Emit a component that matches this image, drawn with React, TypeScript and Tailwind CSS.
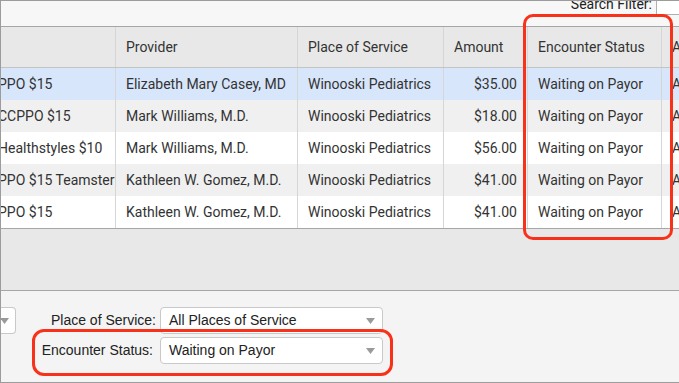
import React from "react";

const rows = [
  { payer: "PPO $15", provider: "Elizabeth Mary Casey, MD", amount: "$35.00", bg: "bg-[#d8e6fb]" },
  { payer: "CCPPO $15", provider: "Mark Williams, M.D.", amount: "$18.00", bg: "bg-[#f0f0f0]" },
  { payer: "Healthstyles $10", provider: "Mark Williams, M.D.", amount: "$56.00", bg: "bg-white" },
  { payer: "PPO $15 Teamster", provider: "Kathleen W. Gomez, M.D.", amount: "$41.00", bg: "bg-[#f0f0f0]" },
  { payer: "PPO $15", provider: "Kathleen W. Gomez, M.D.", amount: "$41.00", bg: "bg-white" },
];

const cell = "h-full flex items-center whitespace-nowrap overflow-hidden border-r border-[#d6d6d6]";

function Arrow() {
  return (
    <svg width="9" height="6" viewBox="0 0 9 6" className="shrink-0">
      <path d="M0 0 L9 0 L4.5 6 Z" fill="#9a9a9a" />
    </svg>
  );
}

export default function App() {
  return (
    <div className="relative w-[679px] h-[383px] overflow-hidden bg-[#f4f4f4] border-l border-t border-b border-[#9c9c9c] text-[#333]" style={{ fontFamily: "Roboto, sans-serif" }}>
      {/* top bar */}
      <div className="h-[25px] bg-[#f7f7f7] flex justify-end items-start">
        <span className="text-[14px] leading-[14px] mt-[-4px] mr-[4px] text-[#222]">Search Filter:</span>
        <div className="w-[23px] h-[15px] mt-[-1px] bg-white border-l border-b border-[#b0b0b0]" />
      </div>

      {/* table */}
      <div className="border-t border-[#a6a6a6] overflow-hidden">
        <div className="ml-[-13px] grid grid-cols-[128px_182px_146px_84px_134px_60px] h-[41px] bg-[#e8e8e8] border-b border-[#c4c4c4] text-[14px]">
          <div className={cell}></div>
          <div className={`${cell} pl-[10px]`}>Provider</div>
          <div className={`${cell} pl-[10px]`}>Place of Service</div>
          <div className={`${cell} pl-[10px]`}>Amount</div>
          <div className={`${cell} pl-[10px]`}>Encounter Status</div>
          <div className="h-full flex items-center whitespace-nowrap overflow-hidden pl-[10px]">Action</div>
        </div>
        {rows.map((r, i) => (
          <div key={i} className={`ml-[-13px] grid grid-cols-[128px_182px_146px_84px_134px_60px] h-[32px] text-[14px] ${r.bg}`}>
            <div className={`${cell} pl-[10px]`}>{r.payer}</div>
            <div className={`${cell} pl-[10px]`}>{r.provider}</div>
            <div className={`${cell} pl-[10px]`}>Winooski Pediatrics</div>
            <div className={`${cell} justify-end pr-[10px]`}>{r.amount}</div>
            <div className={`${cell} pl-[10px]`}>Waiting on Payor</div>
            <div className="h-full flex items-center whitespace-nowrap overflow-hidden pl-[10px]">Adjust</div>
          </div>
        ))}
      </div>

      {/* gray area */}
      <div className="h-[63px] bg-[#e8e8e8] border-t border-b border-[#a6a6a6]" />

      {/* bottom panel */}
      <div className="relative h-[91px] bg-[#f4f4f4] text-[14px] text-[#222]" style={{ fontFamily: '"Liberation Sans", Arial, sans-serif' }}>
        <div className="flex items-start pt-[16px]">
          <div className="w-[15px] h-[27px] bg-white border border-l-0 border-[#c9c9c9] rounded-r-[4px] flex items-center justify-end pr-[6px] shrink-0">
            <Arrow />
          </div>
          <div className="flex flex-col gap-[3px] ml-[7px]">
            <div className="flex items-center">
              <span className="w-[137px] text-right pr-[4px]">Place of Service:</span>
              <div className="w-[223px] h-[27px] bg-white border border-[#c9c9c9] rounded-[4px] flex items-center justify-between pl-[8px] pr-[7px]">
                <span>All Places of Service</span>
                <Arrow />
              </div>
            </div>
            <div className="flex items-center">
              <span className="w-[137px] text-right pr-[7px]">Encounter Status:</span>
              <div className="w-[223px] h-[27px] bg-white border border-[#c9c9c9] rounded-[4px] flex items-center justify-between pl-[8px] pr-[7px]">
                <span>Waiting on Payor</span>
                <Arrow />
              </div>
            </div>
          </div>
        </div>
      </div>

      {/* annotation highlights */}
      <div className="absolute left-[522px] top-[13px] w-[150px] h-[226px] border-[3px] border-[#f8321a] rounded-[10px] pointer-events-none" />
      <div className="absolute left-[31px] top-[328px] w-[361px] h-[47px] border-[3px] border-[#f8321a] rounded-[12px] pointer-events-none" />
    </div>
  );
}
